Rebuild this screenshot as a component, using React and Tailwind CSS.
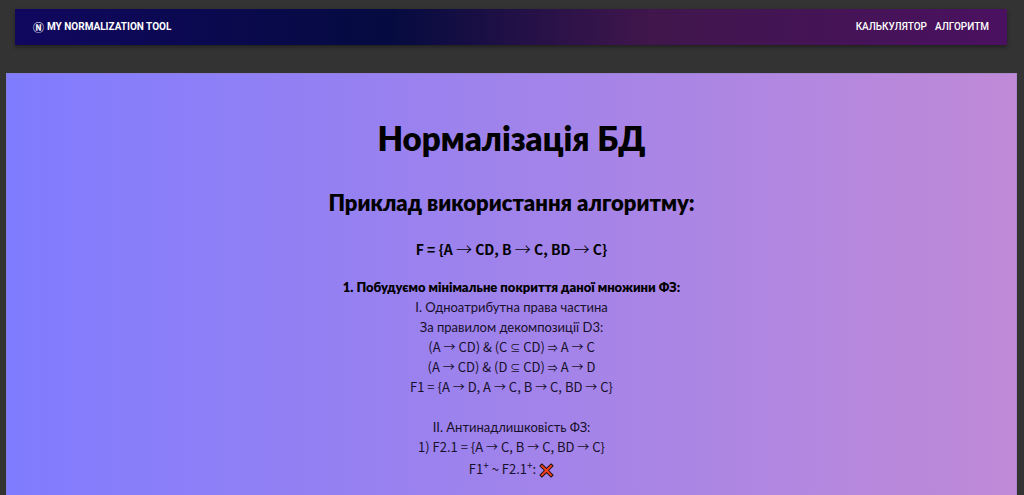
const formula = "font-['Noto_Sans_CJK_SC','Noto_Sans',sans-serif] text-[13px]";
const text = "font-['Lato','Roboto',sans-serif] text-[13px]";

function CrossMark() {
  return (
    <svg viewBox="0 0 16 16" className="ml-[3px] inline-block size-[15px] align-middle" role="img" aria-label="Ні">
      <path
        d="M3 1 8 5.8 13 1 15 3 10.2 8 15 13 13 15 8 10.2 3 15 1 13 5.8 8 1 3Z"
        fill="#f63f1d"
        stroke="#25140f"
        strokeWidth="1.1"
        strokeLinejoin="round"
      />
    </svg>
  );
}

function Plus() {
  return <sup className="text-[10px]">+</sup>;
}

function Arrow() {
  return <span className="text-[12px] leading-none">→</span>;
}

function Op({ children }) {
  return <span className="text-[10px] leading-none">{children}</span>;
}

function Long() {
  return <span className="text-[16px] leading-none font-light">→</span>;
}

export default function App() {
  return (
    <div className="min-h-screen bg-[#333333] pt-[9px] leading-5 text-black">
      <header className="mr-[17px] ml-[15px] flex h-9 items-center justify-between bg-[linear-gradient(to_right,#10075f,#050b40_38%,#40164c_64%,#4a1160)] px-[18px] text-white shadow-[0_2px_4px_rgba(0,0,0,0.4)]">
        <a href="#home" className="flex items-center gap-[3px] font-['Roboto',sans-serif] text-[10px] font-bold">
          <span className="font-['Noto_Sans_CJK_SC',sans-serif] text-[11px] font-bold">Ⓝ</span>
          <span>MY NORMALIZATION TOOL</span>
        </a>
        <nav className="flex gap-2 font-['Roboto',sans-serif] text-[10px] font-medium">
          <a href="#calculator">КАЛЬКУЛЯТОР</a>
          <a href="#algorithm">АЛГОРИТМ</a>
        </nav>
      </header>
      <main className="mt-7 mr-[7px] ml-[6px] border border-[#8c80b8]/40 bg-[linear-gradient(to_right,#807cff,#c08ad7)] bg-origin-border pt-[43px] pb-4 text-center">
        <h1 className="font-['Lato','Roboto',sans-serif] text-[33px] leading-[42px] font-extrabold">Нормалізація БД</h1>
        <h2 className="mt-[29px] font-['Lato','Roboto',sans-serif] text-[22px] leading-[30px] font-extrabold">
          Приклад використання алгоритму:
        </h2>
        <h3 className="mt-[19px] font-['Noto_Sans_CJK_SC',sans-serif] text-[14px] leading-6 font-bold">
          F = {"{"}A <Long /> CD, B <Long /> C, BD <Long /> C{"}"}
        </h3>
        <section className="mt-4 text-[#17102b]">
          <h4 className="font-['Lato','Roboto',sans-serif] text-[13px] font-extrabold text-black">
            1. Побудуємо мінімальне покриття даної множини ФЗ:
          </h4>
          <p className={text}>I. Одноатрибутна права частина</p>
          <p className={text}>За правилом декомпозиції D3:</p>
          <p className={formula}>
            (A <Arrow /> CD) &amp; (C <Op>⊆</Op> CD) <Op>⇒</Op> A <Arrow /> C
          </p>
          <p className={formula}>
            (A <Arrow /> CD) &amp; (D <Op>⊆</Op> CD) <Op>⇒</Op> A <Arrow /> D
          </p>
          <p className={formula}>
            F1 = {"{"}A <Arrow /> D, A <Arrow /> C, B <Arrow /> C, BD <Arrow /> C{"}"}
          </p>
        </section>
        <section className="mt-5 text-[#17102b]">
          <p className={text}>II. Антинадлишковість ФЗ:</p>
          <p className={formula}>
            1) F2.1 = {"{"}A <Arrow /> C, B <Arrow /> C, BD <Arrow /> C{"}"}
          </p>
          <p className={`${formula} leading-6`}>
            F1<Plus /> ~ F2.1<Plus />:<CrossMark />
          </p>
        </section>
      </main>
    </div>
  );
}
